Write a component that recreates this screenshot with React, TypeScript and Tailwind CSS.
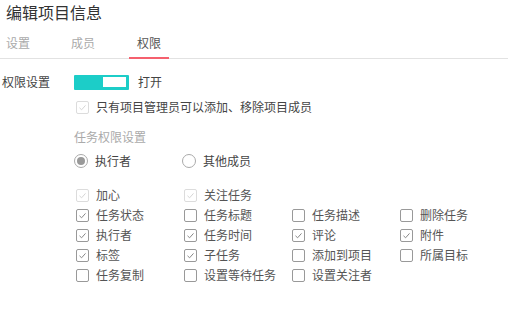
const font = { fontFamily: '"Microsoft YaHei", "Noto Sans CJK SC", sans-serif' };

type Item = { label: string; checked: boolean; disabled?: boolean };

const rows: Item[][] = [
  [
    { label: "加心", checked: true, disabled: true },
    { label: "关注任务", checked: true, disabled: true },
  ],
  [
    { label: "任务状态", checked: true },
    { label: "任务标题", checked: false },
    { label: "任务描述", checked: false },
    { label: "删除任务", checked: false },
  ],
  [
    { label: "执行者", checked: true },
    { label: "任务时间", checked: true },
    { label: "评论", checked: true },
    { label: "附件", checked: true },
  ],
  [
    { label: "标签", checked: true },
    { label: "子任务", checked: true },
    { label: "添加到项目", checked: false },
    { label: "所属目标", checked: false },
  ],
  [
    { label: "任务复制", checked: false },
    { label: "设置等待任务", checked: false },
    { label: "设置关注者", checked: false },
  ],
];

function Box({ checked, disabled }: { checked: boolean; disabled?: boolean }) {
  return (
    <span
      className={`flex h-[13px] w-[13px] shrink-0 items-center justify-center rounded-[2px] border ${
        disabled ? "border-[#dcdcdc]" : "border-[#999]"
      }`}
    >
      {checked && (
        <svg width="9" height="9" viewBox="0 0 9 9" fill="none">
          <path
            d="M1.5 4.8 L3.6 6.8 L7.5 2.4"
            stroke={disabled ? "#d6d6d6" : "#888"}
            strokeWidth="1"
          />
        </svg>
      )}
    </span>
  );
}

function Check({ label, checked, disabled }: Item) {
  return (
    <div className="flex w-[108px] items-center gap-[7px]">
      <Box checked={checked} disabled={disabled} />
      <span className="text-[12px] leading-[20px] text-[#555]">{label}</span>
    </div>
  );
}

function Radio({ label, on }: { label: string; on: boolean }) {
  return (
    <div className="flex w-[108px] items-center gap-[7px]">
      <span className="flex h-[14px] w-[14px] items-center justify-center rounded-full border border-[#aaa]">
        {on && <span className="h-[8px] w-[8px] rounded-full bg-[#999]" />}
      </span>
      <span className="text-[12px] text-[#444]">{label}</span>
    </div>
  );
}

export default function App() {
  return (
    <div className="h-[319px] w-[508px] overflow-hidden bg-white" style={font}>
      {/* Header */}
      <h1 className="pl-[6px] pt-[2px] text-[16px] leading-[20px] text-[#333]">编辑项目信息</h1>

      {/* Tabs */}
      <div className="mt-[12px] flex border-b border-[#e2e2e2] pl-[6px] text-[12px]">
        <div className="w-[65px] pb-[6px] leading-[18px] text-[#aaa]">设置</div>
        <div className="w-[58px] pb-[6px] leading-[18px] text-[#aaa]">成员</div>
        <div className="-mb-px w-[40px] border-b-[2px] border-[#f5606e] pb-[5px] text-center leading-[18px] text-[#555]">
          权限
        </div>
      </div>

      {/* Switch row */}
      <div className="mt-[14px] flex items-center">
        <span className="w-[72px] pl-[2px] text-[12px] text-[#444]">权限设置</span>
        <span className="ml-[2px] flex h-[15px] w-[55px] items-center justify-end rounded-[1px] bg-[#1ccdc8] pr-[3px]">
          <span className="h-[10px] w-[23px] bg-white" />
        </span>
        <span className="ml-[9px] text-[12px] text-[#444]">打开</span>
      </div>

      <div className="ml-[76px] flex flex-col">
        <div className="mt-[7px] flex items-center gap-[7px]">
          <Box checked disabled />
          <span className="text-[12px] text-[#444]">只有项目管理员可以添加、移除项目成员</span>
        </div>

        <div className="mt-[13px] -ml-[2px] text-[12px] leading-[16px] text-[#aaa]">任务权限设置</div>

        <div className="mt-[7px] -ml-[2px] flex">
          <Radio label="执行者" on />
          <Radio label="其他成员" on={false} />
        </div>

        <div className="mt-[15px] flex flex-col">
          {rows.map((row, i) => (
            <div key={i} className="flex">
              {row.map((it) => (
                <Check key={it.label} {...it} />
              ))}
            </div>
          ))}
        </div>
      </div>
    </div>
  );
}
